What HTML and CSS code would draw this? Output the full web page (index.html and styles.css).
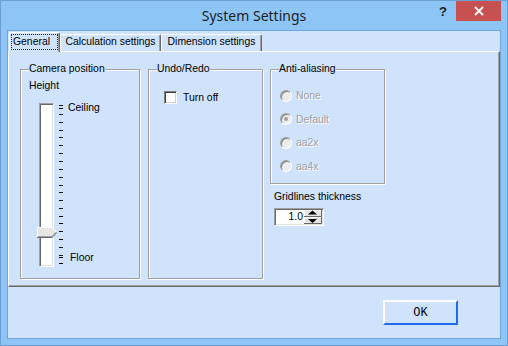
FILE: index.html
```html
<!DOCTYPE html>
<html>
  <head>
    <meta charset="UTF-8">
    <title>System Settings</title>
    <link rel="stylesheet" href="styles.css">
  </head>
  <body>
    <div class="window">
      <div class="titlebar">
        <span></span>
        <div class="title">System Settings</div>
        <div class="caption-buttons">
          <span class="help">?</span>
          <span class="close">
            <svg width="10" height="10" viewBox="0 0 10 10"><path d="M1 1L9 9M9 1L1 9" stroke="#fff" stroke-width="1.8" fill="none"/></svg>
          </span>
        </div>
      </div>

      <div class="client">
        <div class="tabs">
          <div class="tab active"><span class="focus">General</span></div>
          <div class="tab">Calculation settings</div>
          <div class="tab">Dimension settings</div>
        </div>

        <div class="panel">
          <fieldset class="group camera">
            <legend>Camera position</legend>
            <div class="caption">Height</div>
            <div class="slider">
              <div class="track">
                <svg class="thumb" width="20" height="11" viewBox="0 0 20 11">
                  <polygon points="0,0 15,0 19.5,5.5 15,11 0,11" fill="#e6e6e6"/>
                  <path d="M0.5 10V0.5H15.3L19 5" stroke="#fff" fill="none"/>
                  <path d="M0 10.5H15.3L19.5 5.5" stroke="#696969" fill="none"/>
                  <path d="M1 9.5H15L18.5 5.5" stroke="#a0a0a0" fill="none"/>
                </svg>
              </div>
              <svg class="ticks" width="4" height="164" viewBox="0 0 4 164">
                <path d="M0 2h4v1H0zM0 5h4v1H0zM0 11h4v1H0zM0 19h4v1H0zM0 27h4v1H0zM0 34h4v1H0zM0 42h4v1H0zM0 50h4v1H0zM0 58h4v1H0zM0 66h4v1H0zM0 74h4v1H0zM0 82h4v1H0zM0 89h4v1H0zM0 97h4v1H0zM0 105h4v1H0zM0 113h4v1H0zM0 120h4v1H0zM0 128h4v1H0zM0 136h4v1H0zM0 144h4v1H0zM0 152h4v1H0zM0 154h4v1H0zM0 160h4v1H0z" fill="#000"/>
              </svg>
              <div class="slider-labels">
                <span>Ceiling</span>
                <span class="floor">Floor</span>
              </div>
            </div>
          </fieldset>

          <fieldset class="group undo">
            <legend>Undo/Redo</legend>
            <label class="check"><span class="box"></span>Turn off</label>
          </fieldset>

          <div class="col">
            <fieldset class="group aa">
              <legend>Anti-aliasing</legend>
              <div class="radio"><span class="round"></span>None</div>
              <div class="radio"><span class="round checked"></span>Default</div>
              <div class="radio"><span class="round"></span>aa2x</div>
              <div class="radio"><span class="round"></span>aa4x</div>
            </fieldset>
            <div class="caption grid-label">Gridlines thickness</div>
            <div class="spin">
              <div class="spin-value">1.0</div>
              <svg class="spin-buttons" width="18" height="14" viewBox="0 0 18 14">
                <rect x="0" y="0" width="18" height="14" fill="#e3e3e3"/>
                <path d="M0.5 6V0.5H17M0.5 13V7.5H17" stroke="#fff" fill="none"/>
                <path d="M0 6.5H17.5V0M0 13.5H17.5V7" stroke="#696969" fill="none"/>
                <path d="M4 4.5h9L8.5 0.5z" fill="#000"/>
                <path d="M4 9h9L8.5 13z" fill="#000"/>
              </svg>
            </div>
          </div>
        </div>

        <div class="footer">
          <button class="ok">OK</button>
        </div>
      </div>
    </div>
  </body>
</html>
```

FILE: styles.css
```css
* {
  box-sizing: border-box;
}
body {
  margin: 0;
  font-family: "Liberation Sans", Arial, sans-serif;
  font-size: 10.4px;
  color: #000;
}
.window {
  width: 508px;
  height: 346px;
  background: #8cc5f6;
  border: 1px solid #6b9fd1;
  display: flex;
  flex-direction: column;
}
.titlebar {
  height: 29px;
  display: grid;
  grid-template-columns: 1fr auto 1fr;
  align-items: start;
}
.title {
  font-family: "Noto Sans", sans-serif;
  font-size: 14px;
  line-height: 30px;
  color: #1e1e1e;
}
.caption-buttons {
  justify-self: end;
  display: flex;
  margin-right: 6px;
}
.help {
  width: 26px;
  height: 20px;
  line-height: 21px;
  text-align: center;
  font-family: "Liberation Sans", Arial, sans-serif;
  font-size: 13px;
  font-weight: bold;
  color: #1a1a1a;
}
.close {
  width: 45px;
  height: 20px;
  background: #c75050;
  display: flex;
  align-items: center;
  justify-content: center;
}
.client {
  flex: 1;
  margin: 0 6px 6px;
  border: 1px solid #73a4d6;
  background: #cfe3fc;
  display: flex;
  flex-direction: column;
}
.tabs {
  display: flex;
  align-items: flex-end;
  height: 20px;
  margin-top: 1px;
  margin-bottom: -1px;
  padding-left: 1px;
  position: relative;
  z-index: 1;
}
.tab {
  width: 101px;
  height: 17px;
  margin-bottom: 1px;
  border-top: 1px solid #fff;
  border-left: 1px solid #fff;
  border-right: 1px solid #696969;
  border-radius: 2px 2px 0 0;
  box-shadow: inset -1px 0 0 #a0a0a0;
  background: #cfe3fc;
  text-align: center;
  line-height: 14px;
  white-space: nowrap;
}
.tab.active {
  width: 51px;
  height: 20px;
  margin-bottom: 0;
  padding: 1px 1px 0 1px;
  text-align: left;
}
.focus {
  display: block;
  height: 16px;
  border: 1px dotted #5a1010;
  padding-left: 1px;
  line-height: 14px;
}
.panel {
  height: 236px;
  border: 1px solid;
  border-color: #fff #696969 #696969 #fff;
  box-shadow: inset -1px -1px 0 #a0a0a0;
  display: flex;
  align-items: flex-start;
  padding: 11px 0 0 11px;
}
.group {
  margin: 0;
  padding: 0 8px;
  min-width: 0;
  border: 1px solid #a0a0a0;
  box-shadow: inset 1px 1px 0 #fff, 1px 1px 0 #fff;
}
.group legend {
  padding: 0;
  line-height: 12px;
  background: #cfe3fc;
}
.camera {
  width: 120px;
  height: 216px;
}
.undo {
  width: 115px;
  height: 216px;
  margin-left: 8px;
}
.col {
  width: 115px;
  margin-left: 7px;
  display: flex;
  flex-direction: column;
}
.aa {
  height: 121px;
  padding-top: 9px;
}
.caption {
  line-height: 12px;
  margin-top: 5px;
  white-space: nowrap;
}
.slider {
  display: flex;
  margin-top: 11px;
  margin-left: 10px;
}
.track {
  position: relative;
  width: 15px;
  height: 164px;
  border: 1px solid;
  border-color: #a0a0a0 #fff #fff #a0a0a0;
  box-shadow: inset 1px 1px 0 #696969, inset -1px -1px 0 #e3e3e3;
  background: #fff;
}
.thumb {
  position: absolute;
  left: -3px;
  top: 123px;
}
.ticks {
  margin-left: 5px;
}
.slider-labels {
  display: flex;
  flex-direction: column;
  justify-content: space-between;
  margin: -1px 0 0 5px;
  padding-bottom: 3px;
  line-height: 12px;
}
.floor {
  padding-left: 2px;
}
.check {
  display: flex;
  align-items: center;
  margin: 16px 0 0 7px;
  line-height: 12px;
}
.box {
  width: 13px;
  height: 13px;
  margin-right: 6px;
  border: 1px solid;
  border-color: #808080 #fff #fff #808080;
  box-shadow: inset 1px 1px 0 #404040, inset -1px -1px 0 #d4d0c8;
  background: #fff;
}
.radio {
  display: flex;
  align-items: center;
  height: 23.5px;
  margin-left: 1px;
  color: #a0a0a0;
  text-shadow: 1px 1px 0 #fff;
}
.round {
  width: 12px;
  height: 12px;
  margin-right: 4px;
  border-radius: 50%;
  border: 1px solid;
  border-color: #a0a0a0 #fff #fff #a0a0a0;
  box-shadow: inset 1px 1px 0 #808080;
  background: #ececec;
  display: flex;
  align-items: center;
  justify-content: center;
}
.round.checked::after {
  content: "";
  width: 4px;
  height: 4px;
  border-radius: 50%;
  background: #a0a0a0;
}
.grid-label {
  margin: 7px 0 0 4px;
}
.spin {
  display: flex;
  width: 50px;
  height: 18px;
  margin: 5px 0 0 4px;
  border: 1px solid;
  border-color: #a0a0a0 #fff #fff #a0a0a0;
  box-shadow: inset 1px 1px 0 #696969, inset -1px -1px 0 #e3e3e3;
  background: #fff;
  padding: 1px;
}
.spin-value {
  width: 28px;
  text-align: right;
  line-height: 14px;
  padding-right: 1px;
}
.footer {
  flex: 1;
  display: flex;
  justify-content: flex-end;
  align-items: flex-start;
  padding: 13px 42px 0 0;
}
.ok {
  width: 75px;
  height: 25px;
  border: 2px solid;
  border-color: #fff #1e6ceb #1e6ceb #fff;
  background: #cfe3fc;
  font-family: "Liberation Mono", "Courier New", monospace;
  font-size: 12px;
  color: #000;
  padding: 0;
}
```
